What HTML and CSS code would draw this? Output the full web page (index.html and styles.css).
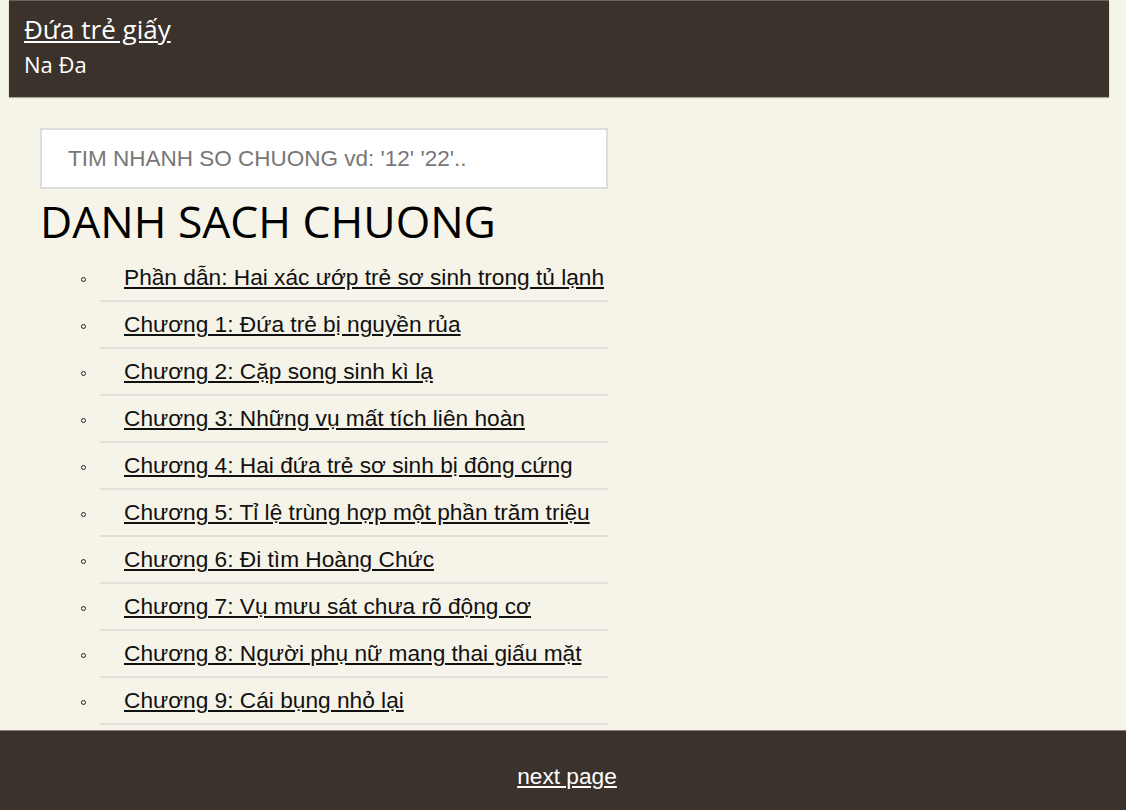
FILE: index.html
```html
<!DOCTYPE html>
<html lang="vi">
<head>
    <meta charset="UTF-8">
    <meta name="viewport" content="width=device-width, initial-scale=1.0">
    <title>Đứa trẻ giấy - Na Đa</title>
    <link rel="stylesheet" href="styles.css">
</head>
<body>
    <div class="header">
        <a href="#" class="book-title">Đứa trẻ giấy</a>
        <div class="author">Na Đa</div>
    </div>

    <div class="content">
        <input type="text" class="search" placeholder="TIM NHANH SO CHUONG vd: '12' '22'..">
        <h1>DANH SACH CHUONG</h1>
        <ul class="chapters">
            <li><a href="#">Phần dẫn: Hai xác ướp trẻ sơ sinh trong tủ lạnh</a></li>
            <li><a href="#">Chương 1: Đứa trẻ bị nguyền rủa</a></li>
            <li><a href="#">Chương 2: Cặp song sinh kì lạ</a></li>
            <li><a href="#">Chương 3: Những vụ mất tích liên hoàn</a></li>
            <li><a href="#">Chương 4: Hai đứa trẻ sơ sinh bị đông cứng</a></li>
            <li><a href="#">Chương 5: Tỉ lệ trùng hợp một phần trăm triệu</a></li>
            <li><a href="#">Chương 6: Đi tìm Hoàng Chức</a></li>
            <li><a href="#">Chương 7: Vụ mưu sát chưa rõ động cơ</a></li>
            <li><a href="#">Chương 8: Người phụ nữ mang thai giấu mặt</a></li>
            <li><a href="#">Chương 9: Cái bụng nhỏ lại</a></li>
        </ul>
    </div>

    <div class="footer">
        <a href="#" class="next-link">next page</a>
    </div>
</body>
</html>
```

FILE: styles.css
```css
body {
    margin: 0;
    background-color: #f6f3e8;
    font-family: 'Liberation Sans', Arial, sans-serif;
    color: #111;
}
.header {
    margin-left: 9px;
    width: 1100px;
    height: 97px;
    box-sizing: border-box;
    padding: 11px 15px 0;
    background-color: #3b322c;
    border-top: 1px solid #6b625b;
    box-shadow: 0 1px 1px rgba(0, 0, 0, 0.3);
    color: #fff;
}
.book-title {
    display: inline-block;
    font-family: 'Open Sans', sans-serif;
    font-size: 26px;
    line-height: 34px;
    color: #fff;
}
.author {
    font-family: 'Open Sans', sans-serif;
    font-size: 22px;
    line-height: 30px;
    margin-top: 3px;
}
.content {
    width: 568px;
    padding: 31px 0 100px 40px;
}
.search {
    display: block;
    width: 568px;
    height: 61px;
    box-sizing: border-box;
    padding: 0 26px;
    border: 2px solid #dcdcdc;
    background-color: #fff;
    font-family: 'Liberation Sans', Arial, sans-serif;
    font-size: 22.5px;
    color: #333;
    outline: none;
}
.search::placeholder {
    color: #777;
}
h1 {
    font-family: 'Open Sans', sans-serif;
    font-weight: 400;
    font-size: 44.4px;
    line-height: 56px;
    margin: 4px 0 6px;
    color: #000;
}
.chapters {
    list-style: none;
    margin: 0;
    padding-left: 60px;
}
.chapters li {
    position: relative;
    padding-left: 24px;
    border-bottom: 2px solid #e1dfd8;
    line-height: 45px;
    font-size: 22.7px;
}
/* small hollow bullet, like the default circle but smaller */
.chapters li::before {
    content: "";
    position: absolute;
    left: -19px;
    top: 22px;
    width: 3px;
    height: 3px;
    border: 1px solid #222;
    border-radius: 50%;
}
.chapters a {
    color: #111;
}
.footer {
    position: fixed;
    left: 0;
    right: 0;
    bottom: 0;
    height: 80px;
    box-sizing: border-box;
    padding-top: 30px;
    background-color: #3b322c;
    border-top: 1px solid #8a8177;
    text-align: center;
}
.next-link {
    color: #fff;
    font-size: 22.7px;
    line-height: 30px;
    margin-left: 8px;
}
```
